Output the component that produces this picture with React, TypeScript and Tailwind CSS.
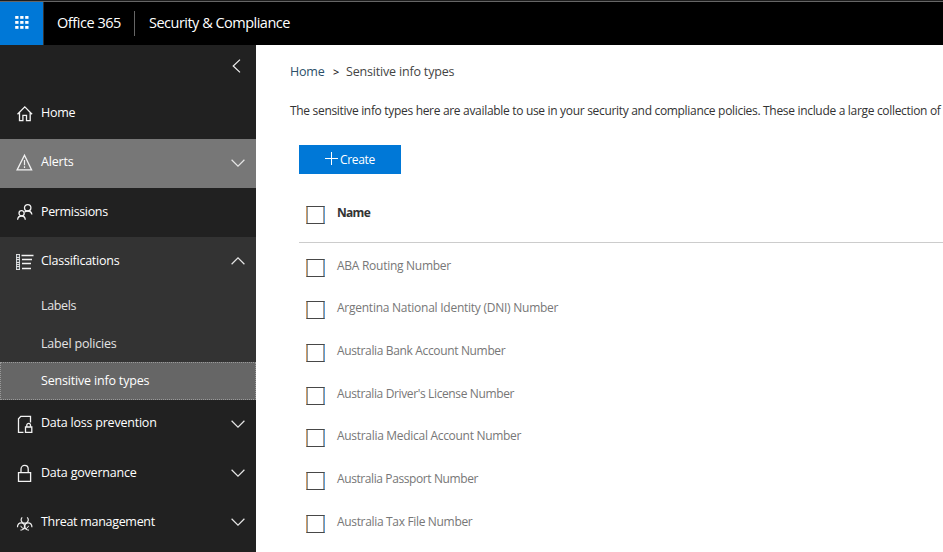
import type { ReactNode } from "react";

const sans = "font-['Open_Sans','Noto_Sans',sans-serif]";

function Glyph({ children }: { children: ReactNode }) {
  return (
    <svg width="18" height="18" viewBox="0 0 18 18" fill="none" stroke="#f2f2f2" strokeWidth="1.2" className="shrink-0 overflow-visible">
      {children}
    </svg>
  );
}

const HomeIcon = () => (
  <Glyph>
    <path d="M1.500 9.300 8.800 1.900l7.300 7.400M3.500 7.500v8.100h3.400v-5.200h3.600v5.200h3.700V7.500" strokeWidth="1.300" />
  </Glyph>
);
const AlertIcon = () => (
  <Glyph>
    <path d="M8.500 1.200 15.600 15.900H1.100z" strokeWidth="1.300" />
    <path d="M8.500 6v5.200M8.500 12.300v1.600" />
  </Glyph>
);
const PeopleIcon = () => (
  <Glyph>
    <circle cx="11.700" cy="4.800" r="3.200" strokeWidth="1.300" />
    <circle cx="5.600" cy="10.300" r="2.600" strokeWidth="1.300" />
    <path d="M1.600 16.700c.2-2.500 1.700-3.700 4-3.700s3.500 1.200 3.700 3.700M8.600 9c.8-.7 1.700-1 3.100-1 2.400 0 3.800 1.100 4.200 3.500" strokeWidth="1.300" />
  </Glyph>
);
const ListIcon = () => (
  <Glyph>
    <path d="M.6 2.200v15.500M3.400 2.200v15.500" stroke="#c9d3da" />
    <path d="M0 2.500h4M0 5.500h4M0 7.500h4M0 10.500h4M0 12.500h4M0 14.500h4M0 17.500h4" strokeWidth="1" stroke="#dedede" />
    <path d="M5.500 3.500h12M6 7.500h10M6 11.500h9M6 16.500h9" strokeWidth="1.300" />
  </Glyph>
);
const FileLockIcon = () => (
  <Glyph>
    <path d="M7.500 17.400H2.500V3.800L4.800 1.400h9.700v6M9.500 12h6.300v5.400H9.500zM10.800 11.800v-1.500c0-2.500 3.700-2.500 3.700 0v1.500" strokeWidth="1.300" />
  </Glyph>
);
const LockIcon = () => (
  <Glyph>
    <path d="M2.500 8.600h12.100v8.700H2.500zM5 8.400V5.200c0-5 7.200-5 7.200 0v3.200" strokeWidth="1.300" />
  </Glyph>
);
const HazardIcon = () => (
  <Glyph>
    <path d="M6.200 4.300C4.600 6 4.800 8.300 6.400 9.400c1.400.9 3.200.9 4.600 0 1.600-1.100 1.800-3.400.2-5.100" />
    <path d="M1.500 14.200c-.2-2.700 1.600-4.400 3.700-4.400 2.200 0 3.600 1.700 3.300 4-.2 1.900-1.700 3.300-4 3.400" />
    <path d="M15.900 14.200c.2-2.700-1.600-4.400-3.700-4.400-2.200 0-3.600 1.700-3.300 4 .2 1.900 1.700 3.300 4 3.400" />
    <path d="M4.900 12.800c.3 1.700 1.700 2.900 3.800 2.900s3.500-1.200 3.800-2.900" strokeWidth="1" />
  </Glyph>
);

function Chevron({ up = false }: { up?: boolean }) {
  return (
    <svg width="14" height="8" viewBox="0 0 14 8" fill="none" stroke="#e6e6e6" strokeWidth="1.200" className="-mt-[2px] shrink-0">
      <path d={up ? "M.6 7.200 7 .9l6.400 6.300" : "M.6.8 7 7.100 13.400.8"} />
    </svg>
  );
}

interface NavProps {
  icon: ReactNode;
  label: string;
  row?: string;
  text?: string;
  chevron?: "up" | "down";
}

function NavItem({ icon, label, row = "", text = "", chevron }: NavProps) {
  return (
    <div className={`flex h-[49px] items-center pl-4 pr-[11px] ${row}`}>
      <span className="-mt-px">{icon}</span>
      <span className={`ml-[7px] flex-1 whitespace-nowrap text-[12.5px] leading-5 text-white ${text}`}>{label}</span>
      {chevron && <Chevron up={chevron === "up"} />}
    </div>
  );
}

function Box() {
  return (
    <span className="block h-[18px] w-[19px] shrink-0 border border-[#484848] border-l-[#d09a62] border-r-[#5a9fdc] shadow-[inset_1px_0_#8797a3,inset_-1px_0_#b39a88]" />
  );
}

const types = [
  { name: "ABA Routing Number", text: "tracking-[-0.27px]" },
  { name: "Argentina National Identity (DNI) Number", text: "tracking-[-0.25px]" },
  { name: "Australia Bank Account Number", text: "tracking-[-0.35px]" },
  { name: "Australia Driver's License Number", text: "tracking-[-0.37px]" },
  { name: "Australia Medical Account Number", text: "tracking-[-0.3px]" },
  { name: "Australia Passport Number", text: "tracking-[-0.4px]" },
  { name: "Australia Tax File Number", text: "tracking-[-0.33px]" },
];

export default function App() {
  return (
    <div className={`flex h-[552px] w-[943px] flex-col overflow-hidden bg-white ${sans}`}>
      <header className="flex h-[45px] shrink-0 border-t border-[#1c1c1c] bg-black text-[14.5px] text-white">
        <div className="flex w-full border-t border-[#666]">
          <div className="flex w-11 items-center justify-center border-r border-[#333] bg-[#0078d7]">
            <svg width="14" height="14" viewBox="0 0 14 14" fill="white" className="-mt-[2px]">
              {[0, 5, 10].map((y) => [0, 5, 10].map((x) => <rect key={`${x}-${y}`} x={x + 0.2} y={y} width="3.300" height="2.800" />))}
            </svg>
          </div>
          <span className="ml-[13px] mt-[11px] w-[77px] whitespace-nowrap leading-5 tracking-[-0.45px]">Office 365</span>
          <span className="mt-[9px] h-[25px] w-px bg-[#666]" />
          <span className="ml-[14px] mt-[11px] whitespace-nowrap leading-5 tracking-[-0.51px]">Security &amp; Compliance</span>
        </div>
      </header>
      <div className="flex min-h-0 flex-1">
        <nav className="flex w-64 shrink-0 flex-col bg-[#212121]">
          <div className="flex h-[45px] shrink-0 justify-end pr-[15px] pt-[14px]">
            <svg width="9" height="14" viewBox="0 0 9 14" fill="none" stroke="#eee" strokeWidth="1.200">
              <path d="M8 .6 1.200 7 8 13.400" />
            </svg>
          </div>
          <NavItem icon={<HomeIcon />} label="Home" text="-mt-[3px] tracking-[-0.25px]" />
          <NavItem icon={<AlertIcon />} label="Alerts" row="bg-[#777]" text="-mt-[3px] tracking-[-0.2px]" chevron="down" />
          <NavItem icon={<PeopleIcon />} label="Permissions" text="-mt-px tracking-[-0.35px]" />
          <div className="bg-[#333]">
            <NavItem icon={<ListIcon />} label="Classifications" text="-mt-px tracking-[-0.25px]" chevron="up" />
            <div className="text-[12.5px] text-[#e4e4e4]">
              <div className="flex h-[39px] items-center pl-[41px] pt-[2px] tracking-[-0.35px]">Labels</div>
              <div className="flex h-[37px] items-center pl-[41px] pt-[2px] tracking-[-0.18px]">Label policies</div>
              <div className="flex h-[38px] items-center border border-dotted border-[#999] bg-[#666] pl-10 tracking-[-0.18px] text-white">
                Sensitive info types
              </div>
            </div>
          </div>
          <NavItem icon={<FileLockIcon />} label="Data loss prevention" text="-mt-[3px] tracking-[-0.22px]" chevron="down" />
          <NavItem icon={<LockIcon />} label="Data governance" text="-mt-px tracking-[-0.2px]" chevron="down" />
          <NavItem icon={<HazardIcon />} label="Threat management" text="-mt-px tracking-[-0.3px]" chevron="down" />
        </nav>
        <main className="min-w-0 flex-1">
          <div className="ml-[34px] mt-[17px] flex h-5 items-center whitespace-nowrap text-[12.5px]">
            <span className="w-[43px] tracking-[-0.2px] text-[#2b4f69]">Home</span>
            <span className="w-[13px] text-[11px] font-semibold text-[#222]">&gt;</span>
            <span className="tracking-[-0.18px] text-[#444]">Sensitive info types</span>
          </div>
          <p className="ml-[34px] mt-[19px] h-5 whitespace-nowrap text-[12px] leading-5 tracking-[-0.315px] text-[#333]">
            The sensitive info types here are available to use in your security and compliance policies. These include a large collection of
          </p>
          <button className="ml-[43px] mt-[24px] flex h-[29px] w-[102px] items-center justify-center bg-[#0078d7] text-[12px] tracking-[-0.3px] text-white">
            <svg width="13" height="13" viewBox="0 0 13 13" stroke="white" className="-mt-[3px] mr-[2px]">
              <path d="M6.500 0v13M0 6.500h13" />
            </svg>
            Create
          </button>
          <div className="ml-[43px] mt-[19px] flex h-[50px] border-b border-[#ccc] pl-[7px] pt-[13px]">
            <Box />
            <span className="-mt-[3px] ml-3 text-[12px] font-bold leading-5 tracking-[-0.7px] text-[#333]">Name</span>
          </div>
          <div className="ml-[50px] mt-[15.6px]">
            {types.map((t) => (
              <div key={t.name} className="flex h-[42.67px]">
                <Box />
                <span className={`-mt-[3px] ml-3 whitespace-nowrap text-[12px] leading-5 text-[#777] ${t.text}`}>{t.name}</span>
              </div>
            ))}
          </div>
        </main>
      </div>
    </div>
  );
}
